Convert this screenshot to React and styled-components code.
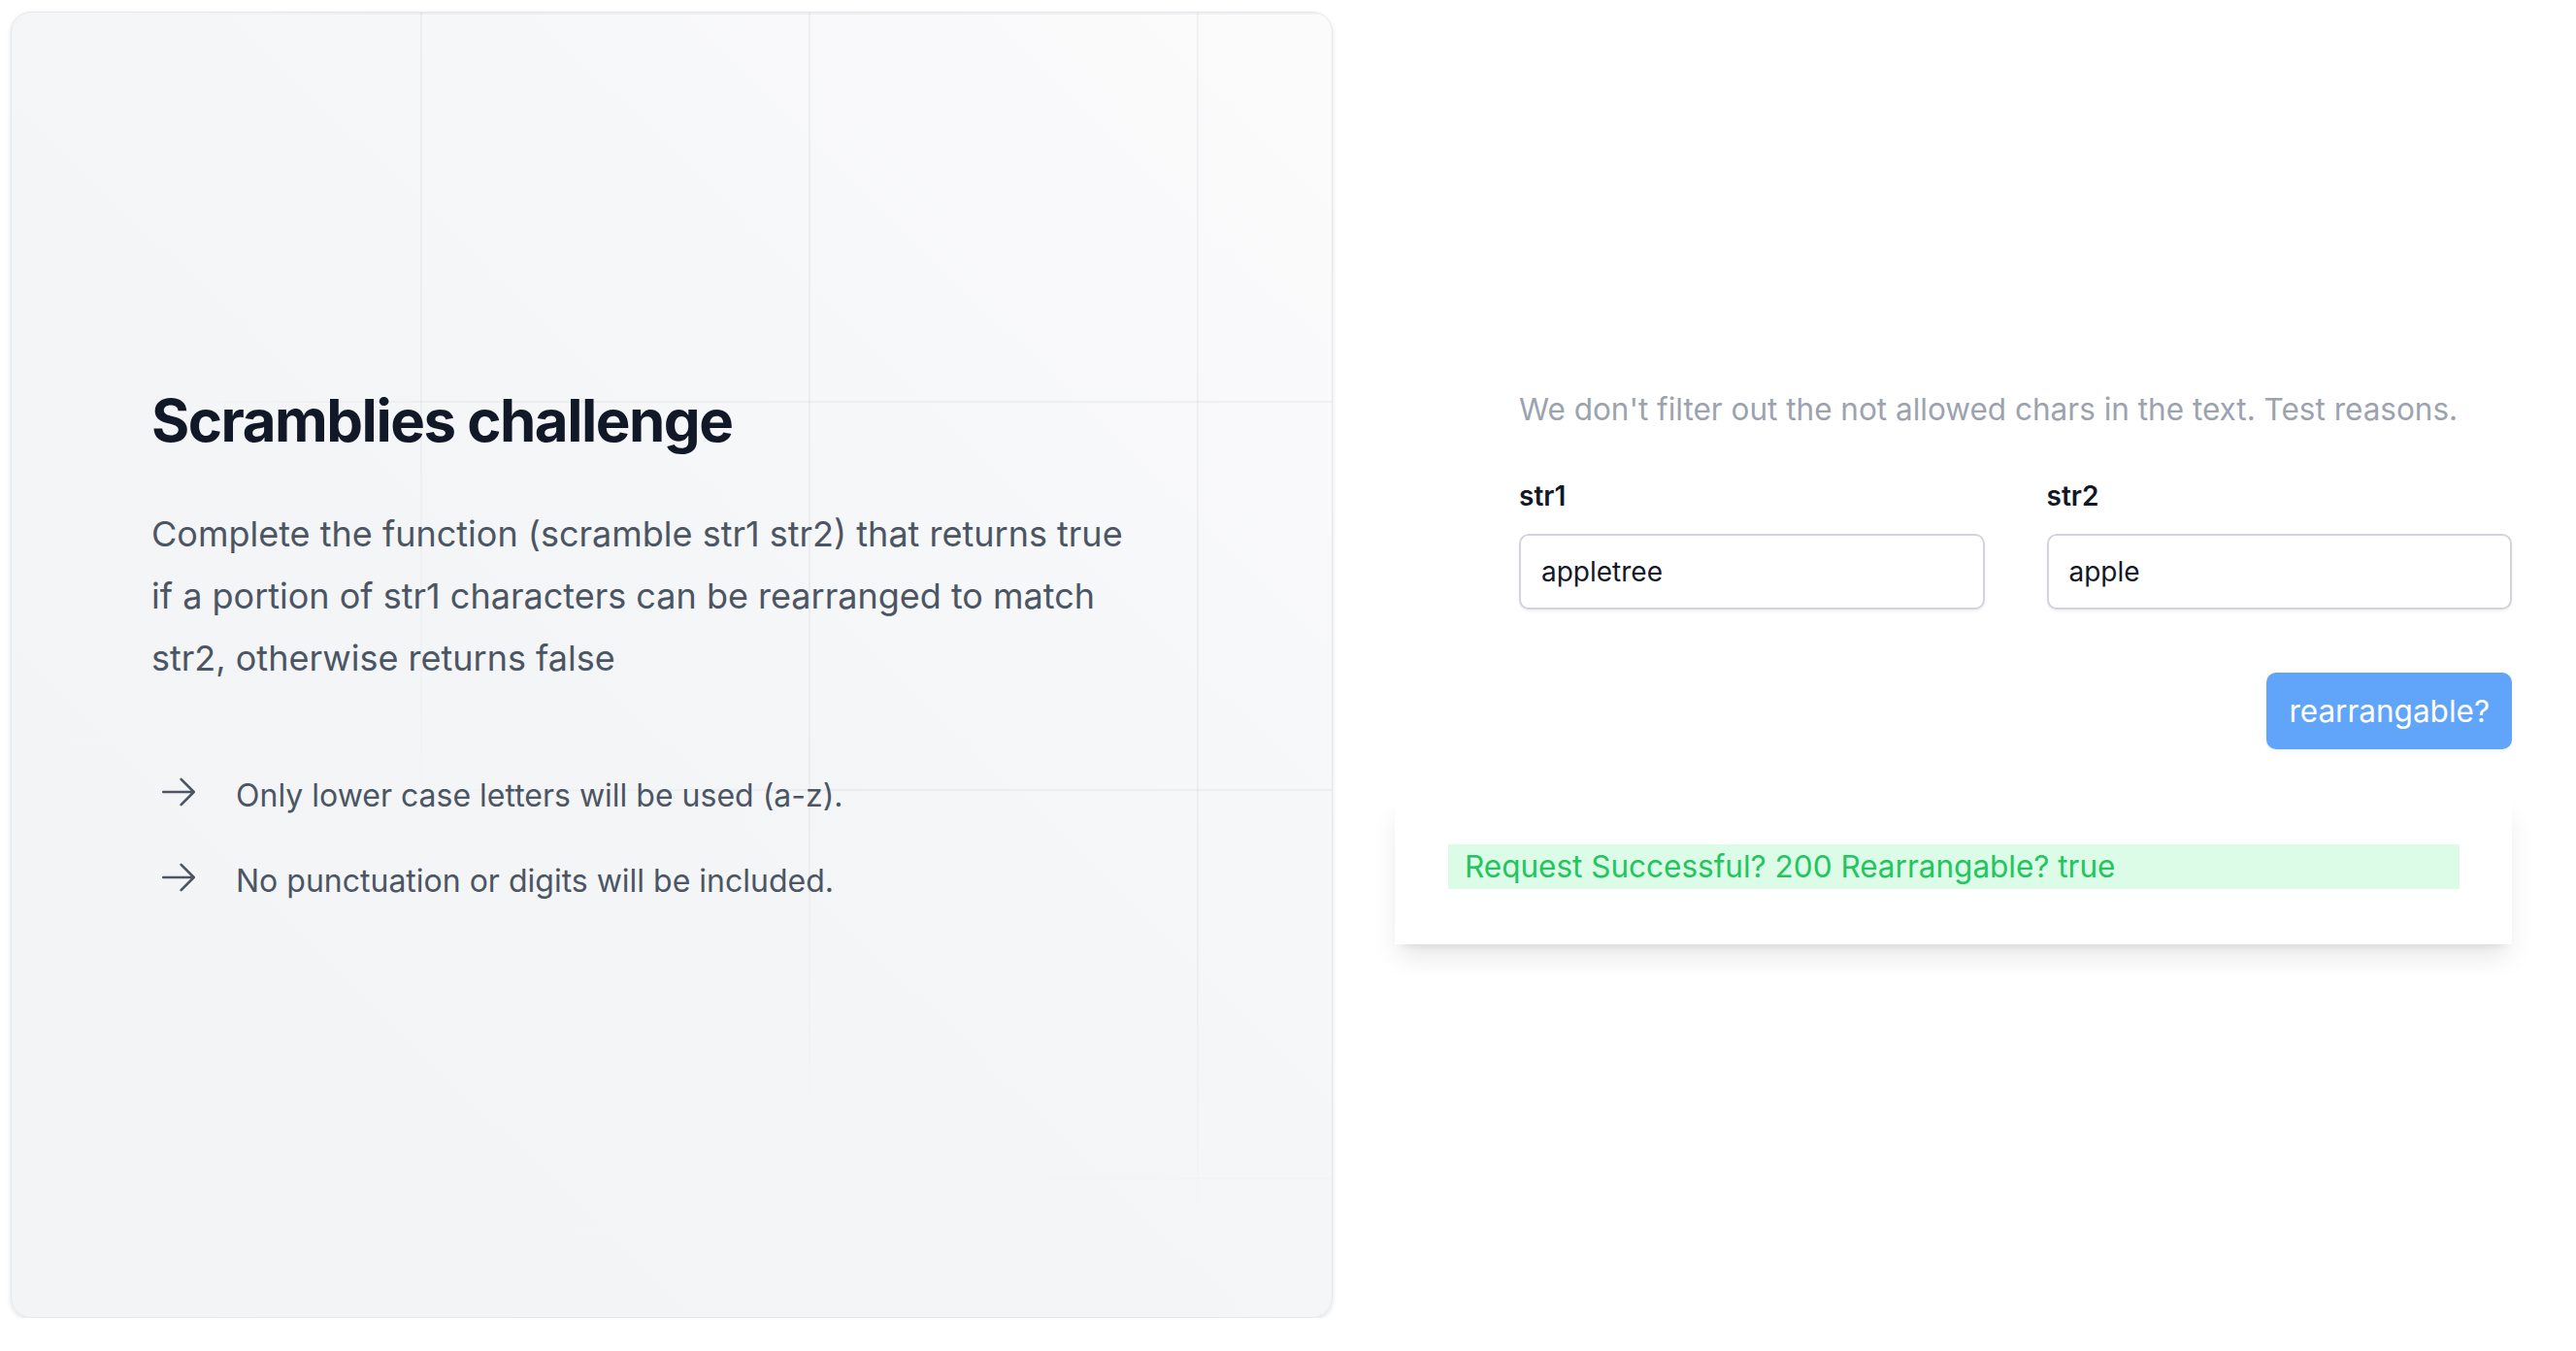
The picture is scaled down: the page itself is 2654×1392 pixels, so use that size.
import React from "react";
import styled, { createGlobalStyle } from "styled-components";

const GlobalStyle = createGlobalStyle`
  html, body {
    margin: 0;
    padding: 0;
    background: #ffffff;
  }

  body {
    font-family: Inter, "Noto Sans", "Liberation Sans", sans-serif;
    -webkit-font-smoothing: antialiased;
  }
`;

const Page = styled.main`
  display: flex;
  align-items: center;
  gap: 64px;
  padding: 12px 0 0 11px;
`;

const ChallengeCard = styled.section`
  position: relative;
  box-sizing: border-box;
  width: 1362px;
  height: 1346px;
  display: flex;
  flex-direction: column;
  justify-content: center;
  padding: 0 145px 40px 144px;
  border: 1px solid #e5e7eb;
  border-radius: 21px;
  overflow: hidden;
  background: linear-gradient(to top right, #f3f4f6 0%, #f4f5f7 45%, #fbfbfc 100%);
  box-shadow: 0 2px 5px rgba(17, 24, 39, 0.12);

  /* faint grid behind the text, fading out from the top right corner */
  &::before {
    content: "";
    position: absolute;
    inset: 0;
    background-image:
      linear-gradient(to right, rgba(17, 24, 39, 0.045) 2px, transparent 2px),
      linear-gradient(to bottom, rgba(17, 24, 39, 0.045) 2px, transparent 2px);
    background-size: 400px 400px;
    background-position: 21px 0;
    -webkit-mask-image: radial-gradient(circle at top right, #000 0, #000 960px, transparent 1250px);
    mask-image: radial-gradient(circle at top right, #000 0, #000 960px, transparent 1250px);
    pointer-events: none;
  }
`;

const CardContent = styled.div`
  position: relative;
`;

const Title = styled.h1`
  margin: 0;
  font-size: 60px;
  line-height: 70px;
  font-weight: 700;
  letter-spacing: -0.025em;
  color: #111827;
`;

const Description = styled.p`
  margin: 50px 0 0;
  max-width: 1018px;
  font-size: 36px;
  line-height: 64px;
  color: #4b5563;
`;

const RuleList = styled.ul`
  margin: 85px 0 0;
  padding: 0 0 0 7px;
  list-style: none;
  display: flex;
  flex-direction: column;
  gap: 39px;
`;

const Rule = styled.li`
  display: flex;
  align-items: flex-start;
  gap: 38px;
  font-size: 32px;
  line-height: 49px;
  color: #4b5563;

  svg {
    flex-shrink: 0;
    width: 42px;
    height: 42px;
  }
`;

const SideColumn = styled.div`
  width: 1151px;
  display: flex;
  flex-direction: column;
  align-items: flex-end;
`;

const Form = styled.form`
  width: 1023px;
  display: flex;
  flex-direction: column;
`;

const Hint = styled.p`
  margin: 0;
  font-size: 31.5px;
  line-height: 49px;
  color: #9ca3af;
`;

const Fields = styled.div`
  margin-top: 44px;
  display: grid;
  grid-template-columns: 1fr 1fr;
  gap: 64px;
`;

const Label = styled.label`
  display: block;
  font-size: 28px;
  line-height: 42px;
  font-weight: 600;
  color: #111827;
`;

const TextInput = styled.input`
  display: block;
  box-sizing: border-box;
  width: 100%;
  height: 78px;
  margin-top: 18px;
  padding: 0 21px;
  border: 2px solid #d1d5db;
  border-radius: 10px;
  background: #ffffff;
  box-shadow: 0 2px 3px rgba(17, 24, 39, 0.06);
  font-family: inherit;
  font-size: 28px;
  color: #111827;
  outline: none;
`;

const Actions = styled.div`
  margin-top: 65px;
  display: flex;
  justify-content: flex-end;
`;

const SubmitButton = styled.button`
  height: 79px;
  padding: 0 23px;
  border: none;
  border-radius: 10px;
  background: #60a5fa;
  box-shadow: 0 2px 3px rgba(17, 24, 39, 0.06);
  font-family: inherit;
  font-size: 31.5px;
  color: #ffffff;
  cursor: pointer;
`;

const ResultCard = styled.div`
  box-sizing: border-box;
  width: 1151px;
  margin-top: 49px;
  padding: 49px 54px 57px 55px;
  background: #ffffff;
  box-shadow: 0 17px 26px -5px rgba(0, 0, 0, 0.1), 0 7px 10px -7px rgba(0, 0, 0, 0.1);
`;

const ResultBar = styled.div`
  padding: 0 17px;
  background: #dcfce7;
  color: #22c55e;
  font-size: 31.5px;
  line-height: 46px;
`;

const ArrowIcon = () => (
  <svg viewBox="0 0 24 24" fill="none" stroke="currentColor" strokeWidth="1.5">
    <path strokeLinecap="round" strokeLinejoin="round" d="M13.5 4.5 21 12m0 0-7.5 7.5M21 12H3" />
  </svg>
);

const rules = [
  "Only lower case letters will be used (a-z).",
  "No punctuation or digits will be included.",
];

const App = () => {
  return (
    <>
      <GlobalStyle />
      <Page>
        <ChallengeCard>
          <CardContent>
            <Title>Scramblies challenge</Title>
            <Description>
              Complete the function (scramble str1 str2) that returns true if a portion of
              str1 characters can be rearranged to match str2, otherwise returns false
            </Description>
            <RuleList>
              {rules.map((rule) => (
                <Rule key={rule}>
                  <ArrowIcon />
                  <span>{rule}</span>
                </Rule>
              ))}
            </RuleList>
          </CardContent>
        </ChallengeCard>

        <SideColumn>
          <Form onSubmit={(e) => e.preventDefault()}>
            <Hint>We don't filter out the not allowed chars in the text. Test reasons.</Hint>
            <Fields>
              <div>
                <Label htmlFor="str1">str1</Label>
                <TextInput id="str1" defaultValue="appletree" />
              </div>
              <div>
                <Label htmlFor="str2">str2</Label>
                <TextInput id="str2" defaultValue="apple" />
              </div>
            </Fields>
            <Actions>
              <SubmitButton type="submit">rearrangable?</SubmitButton>
            </Actions>
          </Form>
          <ResultCard>
            <ResultBar>Request Successful? 200 Rearrangable? true</ResultBar>
          </ResultCard>
        </SideColumn>
      </Page>
    </>
  );
};

export default App;
